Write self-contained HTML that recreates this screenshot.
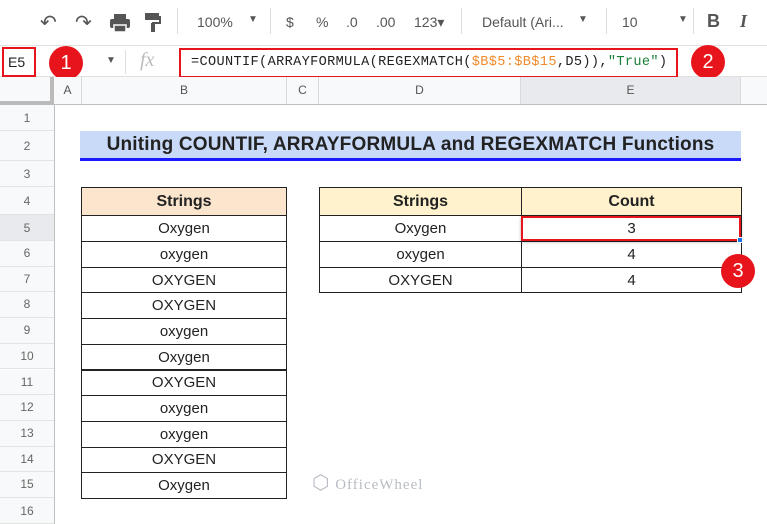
<!DOCTYPE html>
<html><head><style>
*{margin:0;padding:0;box-sizing:border-box}
body{width:767px;height:524px;overflow:hidden;background:#fff;font-family:"Liberation Sans",Arial,sans-serif;position:relative;color:#222}
.a{position:absolute}
.tb{color:#555;font-size:14px}
.rn{position:absolute;left:0;width:54px;text-align:center;font-size:12px;color:#666;background:#f8f9fa;border-bottom:1px solid #e2e3e3}
.ch{position:absolute;top:77px;height:27px;text-align:center;font-size:12px;color:#555;line-height:27px;border-right:1px solid #d9d9d9;background:#f8f9fa}
.c{position:absolute;text-align:center;font-size:15px;border:1px solid #222;display:flex;align-items:center;justify-content:center}
.badge{position:absolute;width:34px;height:34px;border-radius:50%;background:#e8141b;color:#fff;font-size:20px;text-align:center;line-height:34px}
</style></head><body>
<div class="a" style="left:0;top:0;width:767px;height:45px;background:#fff"></div>
<div class="a tb" style="left:40px;top:10px;font-size:20px;color:#555">&#x21B6;</div>
<div class="a tb" style="left:75px;top:10px;font-size:20px;color:#555">&#x21B7;</div>
<svg class="a" style="left:110px;top:14px" width="20" height="18"><rect x="4" y="0" width="12" height="5" fill="#555"/><rect x="0" y="5" width="20" height="9" rx="2" fill="#555"/><rect x="4" y="11" width="12" height="7" fill="#555" stroke="#fff" stroke-width="1.5"/></svg>
<svg class="a" style="left:145px;top:13px" width="16" height="20"><rect x="0" y="0" width="14" height="7" fill="#555"/><rect x="14" y="3" width="2" height="7" fill="#555"/><rect x="7" y="9" width="9" height="2" fill="#555"/><rect x="6" y="10" width="4" height="9" fill="#555"/></svg>
<div class="a" style="left:177px;top:8px;width:1px;height:26px;background:#ddd"></div>
<div class="a tb" style="left:197px;top:14px">100%</div>
<div class="a tb" style="left:248px;top:14px;font-size:10px">▼</div>
<div class="a" style="left:270px;top:8px;width:1px;height:26px;background:#ddd"></div>
<div class="a tb" style="left:286px;top:14px">$</div>
<div class="a tb" style="left:316px;top:14px">%</div>
<div class="a tb" style="left:346px;top:14px">.0</div>
<div class="a tb" style="left:376px;top:14px">.00</div>
<div class="a tb" style="left:414px;top:14px">123▾</div>
<div class="a" style="left:461px;top:8px;width:1px;height:26px;background:#ddd"></div>
<div class="a tb" style="left:482px;top:14px">Default (Ari...</div>
<div class="a tb" style="left:578px;top:14px;font-size:10px">▼</div>
<div class="a" style="left:606px;top:8px;width:1px;height:26px;background:#ddd"></div>
<div class="a tb" style="left:622px;top:14px">10</div>
<div class="a tb" style="left:678px;top:14px;font-size:10px">▼</div>
<div class="a" style="left:693px;top:8px;width:1px;height:26px;background:#ddd"></div>
<div class="a tb" style="left:707px;top:11px;font-size:18px;font-weight:bold">B</div>
<div class="a tb" style="left:740px;top:11px;font-size:18px;font-style:italic;font-family:'Liberation Serif',serif;font-weight:bold">I</div>
<div class="a" style="left:0;top:45px;width:767px;height:32px;background:#fff;border-top:1px solid #e0e0e0;border-bottom:1px solid #e0e0e0"></div>
<div class="a" style="left:2px;top:47px;width:34px;height:30px;border:2px solid #e8141b;font-size:14px;line-height:26px;padding-left:4px">E5</div>
<div class="badge" style="left:49px;top:46px">1</div>
<div class="a tb" style="left:106px;top:55px;font-size:10px">▼</div>
<div class="a" style="left:125px;top:50px;width:1px;height:24px;background:#ddd"></div>
<div class="a" style="left:140px;top:49px;font-family:'Liberation Serif',serif;font-style:italic;font-size:20px;color:#bbb">fx</div>
<div class="a" style="left:179px;top:48px;width:499px;height:30px;border:2px solid #e8141b;font-family:'Liberation Mono',monospace;font-size:13.6px;line-height:26px;padding-left:10px;white-space:nowrap;letter-spacing:0.35px">=COUNTIF(ARRAYFORMULA(REGEXMATCH(<span style="color:#f08a2b">$B$5:$B$15</span>,D5)),<span style="color:#188038">"True"</span>)</div>
<div class="badge" style="left:691px;top:45px">2</div>
<div class="a" style="left:0;top:77px;width:767px;height:28px;background:#f8f9fa;border-bottom:1px solid #c0c0c0"></div>
<div class="a" style="left:0;top:77px;width:54px;height:28px;border-right:4px solid #bbb;border-bottom:4px solid #bbb;background:#f8f9fa"></div>
<div class="ch" style="left:54px;width:28px">A</div>
<div class="ch" style="left:82px;width:205px">B</div>
<div class="ch" style="left:287px;width:32px">C</div>
<div class="ch" style="left:319px;width:202px">D</div>
<div class="ch" style="left:521px;width:220px;background:#e8eaed">E</div>
<div class="a" style="left:54px;top:105px;width:1px;height:419px;background:#c0c0c0"></div>
<div class="rn" style="top:105px;height:26px;line-height:26px">1</div>
<div class="rn" style="top:131px;height:30px;line-height:30px">2</div>
<div class="rn" style="top:161px;height:26px;line-height:26px">3</div>
<div class="rn" style="top:187px;height:28px;line-height:28px">4</div>
<div class="rn" style="top:215px;height:26px;line-height:26px;background:#e8eaed">5</div>
<div class="rn" style="top:241px;height:25.7px;line-height:25.7px">6</div>
<div class="rn" style="top:266.7px;height:25.7px;line-height:25.7px">7</div>
<div class="rn" style="top:292.4px;height:25.7px;line-height:25.7px">8</div>
<div class="rn" style="top:318.1px;height:25.7px;line-height:25.7px">9</div>
<div class="rn" style="top:343.8px;height:25.7px;line-height:25.7px">10</div>
<div class="rn" style="top:369.5px;height:25.7px;line-height:25.7px">11</div>
<div class="rn" style="top:395.2px;height:25.7px;line-height:25.7px">12</div>
<div class="rn" style="top:420.9px;height:25.7px;line-height:25.7px">13</div>
<div class="rn" style="top:446.6px;height:25.7px;line-height:25.7px">14</div>
<div class="rn" style="top:472.3px;height:25.7px;line-height:25.7px">15</div>
<div class="rn" style="top:498px;height:26px;line-height:26px">16</div>
<div class="a" style="left:80px;top:131px;width:661px;height:30px;background:#c9daf8;border-bottom:3px solid #1a1aff;font-weight:bold;font-size:19px;text-align:center;line-height:28px;letter-spacing:0.2px">Uniting COUNTIF, ARRAYFORMULA and REGEXMATCH Functions</div>
<div class="c" style="left:81px;top:187px;width:206px;height:29px;background:#fce5cd;font-weight:bold;font-size:16px">Strings</div>
<div class="c" style="left:81px;top:215px;width:206px;height:27px">Oxygen</div>
<div class="c" style="left:81px;top:241px;width:206px;height:26.7px">oxygen</div>
<div class="c" style="left:81px;top:266.7px;width:206px;height:26.7px">OXYGEN</div>
<div class="c" style="left:81px;top:292.4px;width:206px;height:26.7px">OXYGEN</div>
<div class="c" style="left:81px;top:318.1px;width:206px;height:26.7px">oxygen</div>
<div class="c" style="left:81px;top:343.8px;width:206px;height:26.7px">Oxygen</div>
<div class="c" style="left:81px;top:369.5px;width:206px;height:26.7px">OXYGEN</div>
<div class="c" style="left:81px;top:395.2px;width:206px;height:26.7px">oxygen</div>
<div class="c" style="left:81px;top:420.9px;width:206px;height:26.7px">oxygen</div>
<div class="c" style="left:81px;top:446.6px;width:206px;height:26.7px">OXYGEN</div>
<div class="c" style="left:81px;top:472.3px;width:206px;height:26.7px">Oxygen</div>
<div class="c" style="left:319px;top:187px;width:203px;height:29px;background:#fff2cc;font-weight:bold;font-size:16px">Strings</div>
<div class="c" style="left:521px;top:187px;width:221px;height:29px;background:#fff2cc;font-weight:bold;font-size:16px">Count</div>
<div class="c" style="left:319px;top:215px;width:203px;height:27px">Oxygen</div>
<div class="c" style="left:521px;top:215px;width:221px;height:27px">3</div>
<div class="c" style="left:319px;top:241px;width:203px;height:26.7px">oxygen</div>
<div class="c" style="left:521px;top:241px;width:221px;height:26.7px">4</div>
<div class="c" style="left:319px;top:266.7px;width:203px;height:26.7px">OXYGEN</div>
<div class="c" style="left:521px;top:266.7px;width:221px;height:26.7px">4</div>
<div class="a" style="left:521px;top:216px;width:220px;height:25px;border:2px solid #e8141b;box-shadow:0 1px 3px rgba(0,0,0,.3)"></div>
<div class="a" style="left:737px;top:237px;width:6px;height:6px;background:#1a73e8;border:1px solid #fff"></div>
<div class="badge" style="left:721px;top:254px">3</div>
<div class="a" style="left:312px;top:470px;font-size:15px;color:#b8bcc4;font-family:'Liberation Serif',serif;letter-spacing:1px"><span style="font-size:20px">⬡</span> OfficeWheel</div>
</body></html>
